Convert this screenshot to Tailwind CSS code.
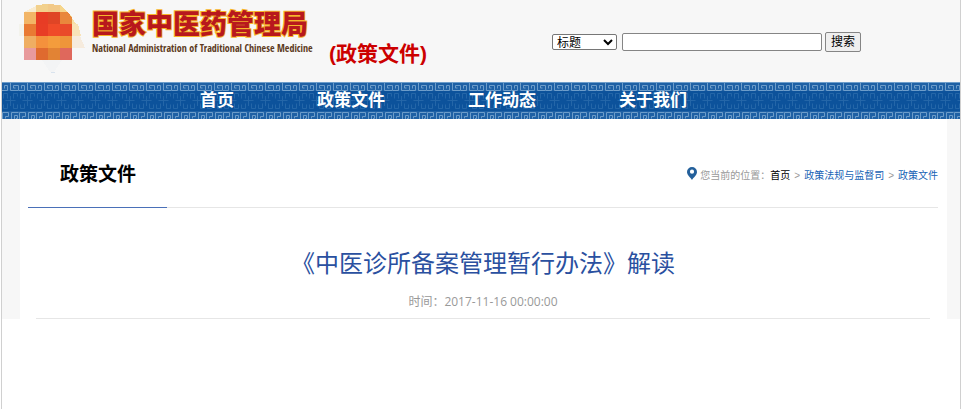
<!DOCTYPE html>
<html lang="zh-CN">
<head>
    <meta charset="UTF-8">
    <meta name="viewport" content="width=device-width, initial-scale=1.0">
    <title>《中医诊所备案管理暂行办法》解读</title>
    <script src="https://cdn.jsdelivr.net/npm/@tailwindcss/browser@4"></script>
</head>
<body class="bg-white font-['Liberation_Sans','Noto_Sans_CJK_SC',sans-serif]">
    <div class="min-h-screen border-x border-[#d0d0d0] ml-px">
        <header class="flex bg-[#f7f7f7]">
            <!-- Emblem -->
            <svg class="ml-4 w-[68px] h-[82px] shrink-0" viewBox="18 0 68 82" shape-rendering="crispEdges" aria-hidden="true">
                <path fill="#f6ebdd" d="M72 36h8l5 12h-13z"/>
                <path fill="#f8e3b8" d="M72 24h6l3 12h-9z"/>
                <path fill="#f9ecd0" d="M24 12l12-6v6z"/>
                <path fill="#f3f3ec" d="M19 24h5v12h-5z"/>
                <path fill="#f2d08c" d="M36 5l12-1v8h-12z"/>
                <path fill="#f2c988" d="M48 4l12 1v7h-12z"/>
                <path fill="#f6d68c" d="M60 5l8 7h-8z"/>
                <path fill="#f2b566" d="M24 12h12v12h-12z"/>
                <path fill="#e73c25" d="M36 12h12v12h-12z"/>
                <path fill="#df4526" d="M48 12h12v12h-12z"/>
                <path fill="#e9873c" d="M60 12h8l4 5v7h-12z"/>
                <path fill="#f7dfa6" d="M68 12l8 12h-4v-7z"/>
                <path fill="#e97a33" d="M24 24h12v12h-12z"/>
                <path fill="#e83d25" d="M36 24h12v12h-12z"/>
                <path fill="#f04b29" d="M48 24h12v12h-12z"/>
                <path fill="#e94a2a" d="M60 24h12v12h-12z"/>
                <path fill="#efae62" d="M24 36h12v12h-12z"/>
                <path fill="#f4913c" d="M36 36h12v12h-12z"/>
                <path fill="#f49c3c" d="M48 36h12v12h-12z"/>
                <path fill="#ee953a" d="M60 36h12v12h-12z"/>
                <path fill="#e89a9c" d="M24 48h12v12h-12z"/>
                <path fill="#df6a2f" d="M36 48h12v12h-12z"/>
                <path fill="#e28334" d="M48 48h12v12h-12z"/>
                <path fill="#df685c" d="M60 48h12v12h-12z"/>
                <path fill="#f3f4f5" d="M42 60h20l-4 6-4 6h-4z"/>
                <path fill="#d9e3ee" d="M51 72h4v1h-4z"/>
            </svg>
            <div class="ml-[6px] w-[237px] shrink-0 pt-[9px] whitespace-nowrap">
                <div class="text-[27px] leading-8 font-black text-[#b8181d] [-webkit-text-stroke:2px_#f7b52c] [paint-order:stroke_fill]">国家中医药管理局</div>
                <div class="text-[10px] leading-[14px] font-bold text-[#5c3a1c] font-['Open_Sans_Condensed','Lato',sans-serif]">National Administration of Traditional Chinese Medicine</div>
            </div>
            <div class="w-[223px] shrink-0 pt-10 text-[21px] leading-7 font-bold text-[#cc0000] whitespace-nowrap">(政策文件)</div>
            <form class="flex items-center h-5 mt-8 text-xs text-black">
                <select name="field" aria-label="检索字段" class="appearance-auto w-[65px] h-4 mr-[5px] p-0 border border-[#767676] rounded-[2px] bg-white text-xs leading-3">
                    <option>标题</option>
                    <option>正文</option>
                </select>
                <input name="keyword" type="text" aria-label="关键词" class="w-[200px] h-[18px] mr-[3px] px-1 border border-[#858585] rounded-[2px] bg-white">
                <button type="submit" class="w-9 h-5 border border-[#858585] rounded-[2px] bg-[#efefef] leading-4">搜索</button>
            </form>
        </header>

        <nav class="relative h-[37px] bg-[#0c529b]">
            <svg class="absolute inset-0 w-full h-full" aria-hidden="true">
                <defs>
                    <pattern id="edge-top" width="17" height="9" patternUnits="userSpaceOnUse">
                        <path fill="none" stroke="#6d9dca" d="M0 .5h17M0 8.500h5.500v-5h-3v3M8.500 1v7.500h8v-5h-5v2.500h2"/>
                    </pattern>
                    <pattern id="edge-bottom" width="17" height="8" patternUnits="userSpaceOnUse">
                        <path fill="none" stroke="#6d9dca" d="M.5 8v-6.500h6v4h-3v2M9.500 8v-6.500h7M12.500 8v-3.500h3v3h-1.500"/>
                    </pattern>
                    <pattern id="fret" width="17" height="20" patternUnits="userSpaceOnUse">
                        <path fill="none" stroke="#2466a8" d="M8.500 5v10M3.500 9.500h10M5.500 7.500v-5h-4v5M11.500 7.500v-5h4v3M5.500 12.500v5h-4v-4M11.500 12.500v5h4v-4"/>
                    </pattern>
                </defs>
                <rect width="100%" height="9" fill="#1f61a5"/>
                <rect width="100%" height="9" fill="url(#edge-top)"/>
                <svg y="9" width="100%" height="20">
                    <rect width="100%" height="20" fill="url(#fret)"/>
                </svg>
                <svg y="29" width="100%" height="8">
                    <rect width="100%" height="8" fill="#1f61a5"/>
                    <rect width="100%" height="8" fill="url(#edge-bottom)"/>
                </svg>
            </svg>
            <ul class="relative flex gap-[83px] pl-[198px] pt-px text-[17px] leading-9 font-bold text-white whitespace-nowrap">
                <li><a href="#">首页</a></li>
                <li><a href="#">政策文件</a></li>
                <li><a href="#">工作动态</a></li>
                <li><a href="#">关于我们</a></li>
            </ul>
        </nav>

        <div class="bg-[#f7f7f7] pl-[18px] pr-[13px]">
            <main class="bg-white pl-2 pr-[9px] pt-8">
                <div class="flex justify-between h-[57px] border-b border-[#e6e6e6]">
                    <h1 class="w-[139px] h-[57px] pl-8 pt-2 border-b border-[#4a70b8] text-[19px] leading-8 font-bold whitespace-nowrap"><span class="text-black">政策文件</span></h1>
                    <div class="flex items-center h-6 mt-3 text-[10px] text-[#999] whitespace-nowrap">
                        <svg class="w-[10px] h-[13px] mr-[3px] -mt-1" viewBox="0 0 10 13" aria-hidden="true">
                            <path fill="#24609b" fill-rule="evenodd" d="M5 0a5 5 0 0 0-5 5c0 3 3.500 5.500 5 8 1.500-2.500 5-5 5-8a5 5 0 0 0-5-5zm0 2.600a2.100 2.100 0 1 1 0 4.200 2.100 2.100 0 0 1 0-4.200z"/>
                        </svg>
                        <span>您当前的位置：</span>
                        <a href="#" class="text-black">首页</a>
                        <span class="px-1">&gt;</span>
                        <a href="#" class="text-[#1763b5]">政策法规与监督司</a>
                        <span class="px-1">&gt;</span>
                        <a href="#" class="text-[#1763b5]">政策文件</a>
                    </div>
                </div>
                <article class="mx-2 pt-9 pb-[6px] border-b border-[#e6e6e6] text-center">
                    <h2 class="text-2xl leading-10 font-normal text-[#2a50a0]">《中医诊所备案管理暂行办法》解读</h2>
                    <p class="mt-2 text-xs leading-5 text-[#999] font-['Open_Sans','Noto_Sans_CJK_SC',sans-serif]">时间：2017-11-16 00:00:00</p>
                </article>
            </main>
        </div>
    </div>
</body>
</html>
